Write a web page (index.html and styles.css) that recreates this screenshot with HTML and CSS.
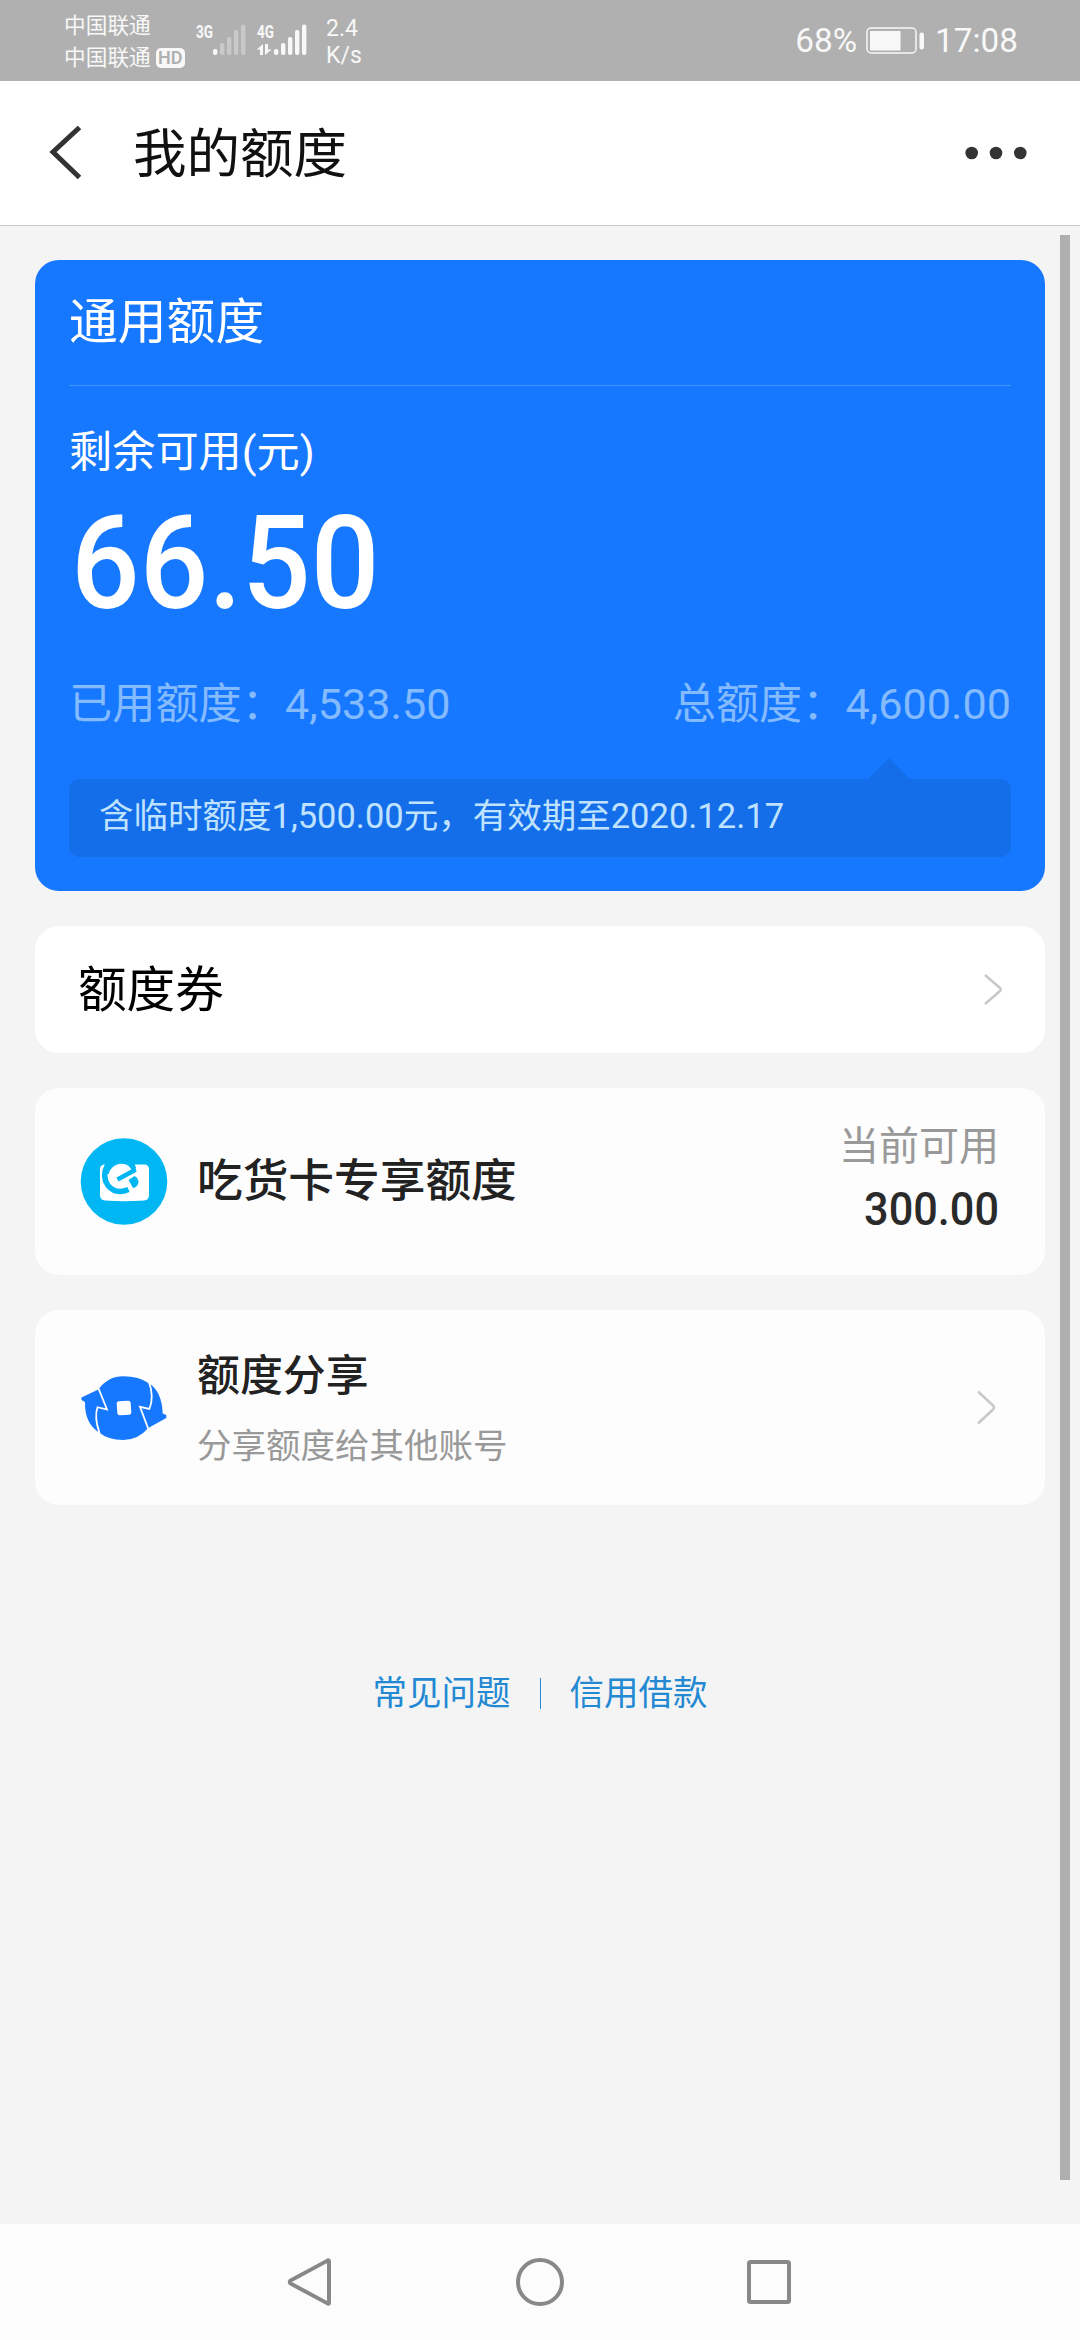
FILE: index.html
```html
<!DOCTYPE html>
<html lang="zh-CN">
<head>
<meta charset="utf-8">
<title>我的额度</title>
<link rel="stylesheet" href="styles.css">
</head>
<body>
<div class="screen">
  <header class="status">
    <div class="carriers">
      <div class="carrier">中国联通</div>
      <div class="carrier">中国联通<span class="hd">HD</span></div>
    </div>
    <svg class="signal" width="54" height="40" viewBox="0 0 54 40">
      <text class="net" x="1" y="18" textLength="17" lengthAdjust="spacingAndGlyphs">3G</text>
      <g fill="#f8f8f8">
        <rect x="18" y="29" width="4.4" height="6" rx="2"/>
        <g opacity=".35">
          <rect x="25" y="23" width="4.4" height="12" rx="2"/>
          <rect x="32" y="17" width="4.4" height="18" rx="2"/>
          <rect x="39" y="10" width="4.4" height="25" rx="2"/>
          <rect x="46" y="4.500" width="4.4" height="30.500" rx="2"/>
        </g>
      </g>
    </svg>
    <svg class="signal signal-b" width="54" height="40" viewBox="0 0 54 40">
      <text class="net" x="1" y="18" textLength="17" lengthAdjust="spacingAndGlyphs">4G</text>
      <g fill="#f8f8f8">
        <path d="M7 24v11H4v-5.500H.8zM9 35V24h3v5.500H15.800z"/>
        <rect x="18" y="29" width="4.4" height="6" rx="2"/>
        <rect x="25" y="23" width="4.4" height="12" rx="2"/>
        <rect x="32" y="17" width="4.4" height="18" rx="2"/>
        <rect x="39" y="10" width="4.4" height="25" rx="2"/>
        <rect x="46" y="4.500" width="4.4" height="30.500" rx="2"/>
      </g>
    </svg>
    <div class="speed"><div>2.4</div><div>K/s</div></div>
    <div class="status-right">
      <span>68%</span>
      <svg class="battery" width="60" height="28" viewBox="0 0 60 28">
        <rect x="1" y="1" width="49" height="25" rx="4" fill="none" stroke="#f8f8f8" stroke-width="1.500"/>
        <rect x="4" y="4" width="30.500" height="19.500" fill="#f8f8f8"/>
        <rect x="53.500" y="5.500" width="4.500" height="17" rx="2" fill="#f8f8f8"/>
      </svg>
      <span>17:08</span>
    </div>
  </header>

  <nav class="titlebar">
    <svg class="back" width="34" height="54" viewBox="0 0 34 54" fill="none" stroke="#333" stroke-width="5">
      <path d="M30.500 1.500 4 26l26.500 25.500"/>
    </svg>
    <h1>我的额度</h1>
    <svg class="more" width="62" height="14" viewBox="0 0 62 14" fill="#333">
      <circle cx="6.700" cy="7" r="6.300"/><circle cx="31" cy="7" r="6.300"/><circle cx="55.300" cy="7" r="6.300"/>
    </svg>
  </nav>

  <main class="content">
    <section class="quota">
      <h2>通用额度</h2>
      <div class="label">剩余可用(元)</div>
      <div class="amount">66.50</div>
      <div class="totals"><span>已用额度：4,533.50</span><span>总额度：4,600.00</span></div>
      <div class="tip">含临时额度1,500.00元，有效期至2020.12.17</div>
    </section>

    <section class="card coupon">
      <span class="coupon-name">额度券</span>
      <svg class="chevron" width="20" height="34" viewBox="0 0 20 34"><path d="M2 2 17 15q1.500 1.500 0 3L2 31"/></svg>
    </section>

    <section class="card foodie">
      <svg class="icon" width="88" height="88" viewBox="0 0 88 88">
        <circle cx="44" cy="43.500" r="43.300" fill="#00b7f4"/>
        <path d="M25 26.500H64q5 0 5 5V57q0 5-5 5.500Q44 64 25 62.500q-5-.5-5-5.500V31.500q0-5 5-5z" fill="#fff"/>
        <path d="M26 24h28l2 6-10 6H25z" fill="#00b7f4"/>
        <circle cx="41.500" cy="39" r="13.200" fill="#fff"/>
        <path d="M27.500 27Q21.500 38 28 47.500q8 9.500 20.500 4" fill="none" stroke="#00b7f4" stroke-width="5.500"/>
        <path d="M37.500 41.500 54 32.500Q53 28.500 50 26" fill="none" stroke="#00b7f4" stroke-width="4.500"/>
        <path d="m48.500 42 6-4q4 2 4 6.500-1.500 5-5.500 5.500z" fill="#00b7f4"/>
      </svg>
      <div class="name">吃货卡专享额度</div>
      <div class="available"><div class="caption">当前可用</div><div class="value">300.00</div></div>
    </section>

    <section class="card share">
      <svg class="icon" width="88" height="68" viewBox="0 0 88 68">
        <path d="M1.500 23.500 18.300 15.500Q28 2.200 43.300 2.200 59 2.200 69.300 9.500 82 18 82.700 39.500L86.300 41v3L68.300 54Q58 66 43.300 66 28 66 18.500 58 4.500 49 5 28L1.500 26z" fill="#1677ff"/>
        <g fill="none" stroke="#fdfdfd" stroke-width="1.800">
          <path d="M18.300 14 27 35.500l-9.500-2.300Q14 43 19.500 59"/>
          <path d="M68.800 7.500Q74.500 23 69.300 35L60 32.800 68.500 55.500"/>
        </g>
        <rect x="37" y="27" width="14" height="14" rx="2.500" fill="#fff" transform="rotate(-4 44 34)"/>
      </svg>
      <div class="share-text"><div class="share-name">额度分享</div><div class="share-desc">分享额度给其他账号</div></div>
      <svg class="chevron" width="20" height="37" viewBox="0 0 20 37"><path d="M2 2.500 17 16.500q2 2 0 4L2 34.500"/></svg>
    </section>

    <footer class="links"><a>常见问题</a><i></i><a>信用借款</a></footer>
    <div class="scrollbar"></div>
  </main>

  <nav class="sysnav">
    <svg width="50" height="52" viewBox="0 0 50 52"><path d="M43 5.500v41q0 2-2 .6L4.500 27.500q-1.500-1.500 0-3L41 4.900q2-1.400 2 .6z"/></svg>
    <svg width="50" height="52" viewBox="0 0 50 52"><circle cx="25" cy="26" r="22"/></svg>
    <svg width="50" height="52" viewBox="0 0 50 52"><rect x="5" y="6" width="40" height="40" rx="1.500"/></svg>
  </nav>
</div>
</body>
</html>
```
FILE: styles.css
```css
* { box-sizing: border-box; }
body {
  margin: 0;
  font-family: Roboto, "Noto Sans CJK SC", sans-serif;
  color: #000;
}
h1, h2 { margin: 0; font-weight: 400; }
svg { display: block; flex: none; }
.screen {
  width: 1080px;
  height: 2340px;
  display: flex;
  flex-direction: column;
  background: #f4f4f4;
  overflow: hidden;
  white-space: nowrap;
}

/* status bar */
.status {
  height: 81px;
  flex: none;
  display: flex;
  align-items: flex-start;
  padding: 0 62px 0 64px;
  background: #b0b0b0;
  color: #f8f8f8;
}
.carriers { width: 131px; padding-top: 10px; }
.carrier {
  display: flex;
  align-items: center;
  height: 32px;
  font-size: 21.7px;
  line-height: 32px;
}
.hd {
  width: 29px;
  height: 20px;
  margin-left: 5px;
  border-radius: 5px;
  background: #f8f8f8;
  color: #b0b0b0;
  font-size: 18px;
  font-weight: 600;
  line-height: 20px;
  text-align: center;
}
.signal { margin-top: 20px; }
.signal-b { margin-left: 7px; }
.net { font-size: 18px; font-weight: 700; fill: #f8f8f8; }
.speed {
  margin: 15px 0 0 16px;
  font-size: 23px;
  line-height: 27px;
}
.status-right {
  margin-left: auto;
  display: flex;
  align-items: center;
  height: 81px;
  font-size: 33.3px;
}
.battery { margin: 0 9px; }

/* title bar */
.titlebar {
  height: 145px;
  flex: none;
  display: flex;
  align-items: center;
  padding: 0 53px 0 49px;
  border-bottom: 1px solid #c8c8c8;
  background: #fff;
}
.titlebar h1 {
  margin-left: 50px;
  padding-top: 4px;
  font-size: 53.5px;
  line-height: 80px;
  color: #111;
}
.more { margin-left: auto; }

.content {
  flex: 1;
  position: relative;
  padding: 34px 35px 0;
}

/* blue quota card */
.quota {
  height: 631px;
  padding: 0 34px;
  border-radius: 24px;
  background: #1677ff;
  color: #fff;
}
.quota h2 {
  height: 126px;
  border-bottom: 1px solid #4492ff;
  font-size: 48.8px;
  line-height: 126px;
}
.label {
  margin-top: 37px;
  font-size: 43.2px;
  line-height: 60px;
}
.amount {
  margin: 11px 0 0 2px;
  width: 400px;
  font-size: 130px;
  font-weight: 500;
  line-height: 140px;
  transform: scaleX(.93);
  transform-origin: left;
}
.totals {
  display: flex;
  justify-content: space-between;
  margin-top: 40px;
  font-size: 43.2px;
  line-height: 62px;
  color: #84bbff;
}
.tip {
  position: relative;
  height: 78px;
  margin-top: 43px;
  padding-left: 30px;
  border-radius: 11px;
  background: #146eea;
  color: #bfe2ff;
  font-size: 34.5px;
  line-height: 75px;
}
.tip::before {
  content: "";
  position: absolute;
  left: 799px;
  top: -21px;
  border: 21px solid transparent;
  border-top: 0;
  border-bottom-color: #146eea;
}

/* white cards */
.card {
  display: flex;
  align-items: center;
  border-radius: 24px;
  background: #fdfdfd;
}
.chevron {
  margin-left: auto;
  fill: none;
  stroke: #c8c8c8;
  stroke-width: 2.5;
}
.coupon {
  height: 127px;
  margin-top: 35px;
  padding: 0 42px 0 43px;
  background: #fff;
  font-size: 48.6px;
}
.coupon-name { padding-bottom: 8px; }
.foodie {
  height: 187px;
  margin-top: 35px;
  padding: 0 46px 0 45px;
}
.name {
  margin-left: 29px;
  padding-bottom: 9px;
  font-size: 45.7px;
  font-weight: 500;
  color: #222;
}
.available { margin-left: auto; padding-bottom: 5px; text-align: right; }
.caption { font-size: 40px; line-height: 60px; color: #999; }
.value {
  font-size: 46px;
  font-weight: 500;
  line-height: 64px;
  color: #2a2a2a;
  transform: scaleX(.94);
  transform-origin: right;
}
.share {
  height: 195px;
  margin-top: 35px;
  padding: 0 49px 0 45px;
}
.share-text { margin-left: 29px; padding-top: 6px; }
.share-name { font-size: 42.9px; font-weight: 500; line-height: 70px; color: #222; }
.share-desc { font-size: 34.5px; line-height: 70px; color: #999; }

.links {
  display: flex;
  justify-content: center;
  align-items: center;
  gap: 29px;
  margin-top: 163px;
  font-size: 34.5px;
  line-height: 50px;
  color: #2389d2;
}
.links i { width: 1px; height: 31px; background: #2389d2; }
.scrollbar {
  position: absolute;
  top: 9px;
  right: 10px;
  width: 10px;
  height: 1945px;
  background: #afafaf;
}

/* system navigation */
.sysnav {
  height: 116px;
  flex: none;
  display: flex;
  justify-content: center;
  align-items: center;
  gap: 179px;
  background: #fcfcfc;
}
.sysnav svg { fill: none; stroke: #888; stroke-width: 4; }
```
